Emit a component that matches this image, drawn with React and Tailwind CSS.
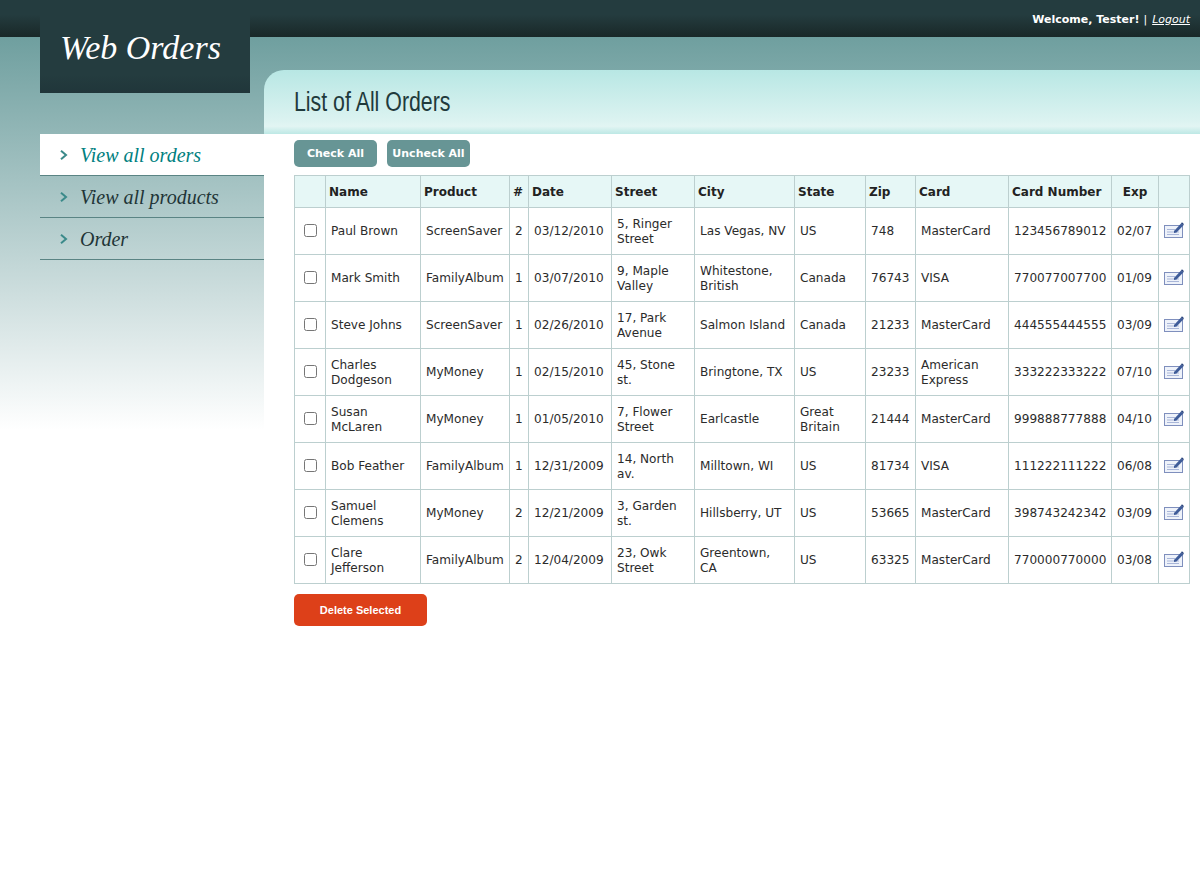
import React from 'react';

const orders = [
  ['Paul Brown', 'ScreenSaver', '2', '03/12/2010', '5, Ringer Street', 'Las Vegas, NV', 'US', '748', 'MasterCard', '123456789012', '02/07'],
  ['Mark Smith', 'FamilyAlbum', '1', '03/07/2010', '9, Maple Valley', 'Whitestone, British', 'Canada', '76743', 'VISA', '770077007700', '01/09'],
  ['Steve Johns', 'ScreenSaver', '1', '02/26/2010', '17, Park Avenue', 'Salmon Island', 'Canada', '21233', 'MasterCard', '444555444555', '03/09'],
  ['Charles Dodgeson', 'MyMoney', '1', '02/15/2010', '45, Stone st.', 'Bringtone, TX', 'US', '23233', 'American Express', '333222333222', '07/10'],
  ['Susan McLaren', 'MyMoney', '1', '01/05/2010', '7, Flower Street', 'Earlcastle', 'Great Britain', '21444', 'MasterCard', '999888777888', '04/10'],
  ['Bob Feather', 'FamilyAlbum', '1', '12/31/2009', '14, North av.', 'Milltown, WI', 'US', '81734', 'VISA', '111222111222', '06/08'],
  ['Samuel Clemens', 'MyMoney', '2', '12/21/2009', '3, Garden st.', 'Hillsberry, UT', 'US', '53665', 'MasterCard', '398743242342', '03/09'],
  ['Clare Jefferson', 'FamilyAlbum', '2', '12/04/2009', '23, Owk Street', 'Greentown, CA', 'US', '63325', 'MasterCard', '770000770000', '03/08'],
];

const columns = ['', 'Name', 'Product', '#', 'Date', 'Street', 'City', 'State', 'Zip', 'Card', 'Card Number', 'Exp', ''];
const widths = [31, 95, 89, 19, 83, 83, 100, 71, 50, 93, 103, 47, 31];

export default function App() {
  return (
    <div className="relative min-h-[888px] bg-white font-['DejaVu_Sans',sans-serif]">
      {/* Top bar */}
      <header className="flex h-[37px] items-start justify-end bg-gradient-to-b from-[#243c3f] from-40% to-[#192828] pr-[10px] pt-[13px] text-[11px] leading-[14px] text-white">
        <span className="font-bold">Welcome, Tester!</span>
        <span className="ml-[4px] mr-[5px]">|</span>
        <a className="italic underline">Logout</a>
      </header>

      {/* Logo */}
      <div className="absolute left-[40px] top-0 flex h-[93px] w-[210px] items-center bg-gradient-to-b from-[#243c3f] from-80% to-[#20363a] pl-[20px] pt-[2px] font-['Liberation_Serif',serif] text-[34px] italic text-white">
        Web Orders
      </div>

      <div className="flex bg-[linear-gradient(to_bottom,#6f9f9f,#ffffff)] bg-[size:100%_393px] bg-no-repeat">
        {/* Sidebar */}
        <aside className="w-[264px] shrink-0 pl-[40px] pt-[97px]">
          <NavItem label="View all orders" active />
          <NavItem label="View all products" />
          <NavItem label="Order" />
        </aside>

        {/* Main */}
        <main className="mt-[33px] min-w-0 flex-1">
          <div className="flex h-[64px] items-center rounded-tl-[20px] bg-[linear-gradient(to_bottom,#b8e7e4,#dcf3f1_80%,#e2f5f3_88%,#bde8e5)] pl-[30px]">
            <h1 className="origin-left scale-x-[0.79] font-['Liberation_Sans',sans-serif] text-[27px] leading-[32px] text-[#1f3a3c]">
              List of All Orders
            </h1>
          </div>

          <div className="bg-white pl-[30px] pr-[10px]">
            <div className="flex gap-[10px] pt-[6px]">
              <ToolButton label="Check All" />
              <ToolButton label="Uncheck All" />
            </div>

            <table className="mt-[8px] w-[896px] table-fixed border-collapse text-[12.1px] leading-[15px] text-[#2b2b2b]">
              <colgroup>
                {widths.map((w, i) => (
                  <col key={i} style={{ width: w }} />
                ))}
              </colgroup>
              <thead>
                <tr className="h-[32px] bg-[#e6f7f6]">
                  {columns.map((c, i) => (
                    <th
                      key={i}
                      className={'border border-[#bccfcf] px-[3px] pt-[2px] text-[12px] font-bold text-[#222222] ' + (c === 'Exp' ? 'text-center' : 'text-left')}
                    >
                      {c}
                    </th>
                  ))}
                </tr>
              </thead>
              <tbody>
                {orders.map((row) => (
                  <tr key={row[0]} className="h-[47px]">
                    <td className="border border-[#bccfcf] text-center">
                      <input type="checkbox" className="m-0 mb-[2px] inline-block h-[13px] w-[13px] align-middle" />
                    </td>
                    {row.map((v, i) => (
                      <td key={i} className="border border-[#bccfcf] px-[5px] pt-[1px]">
                        {v}
                      </td>
                    ))}
                    <td className="border border-[#bccfcf] text-center">
                      <EditIcon />
                    </td>
                  </tr>
                ))}
              </tbody>
            </table>

            <button className="mt-[10px] h-[32px] w-[133px] rounded-[5px] bg-[#dd4019] font-['Liberation_Sans',sans-serif] text-[11px] font-bold text-white">
              Delete Selected
            </button>
          </div>
        </main>
      </div>
    </div>
  );
}

function NavItem({ label, active }) {
  return (
    <div
      className={
        'flex h-[42px] items-center border-b border-[#5a8484] pl-[20px] font-[\'Liberation_Serif\',serif] text-[20px] italic ' +
        (active ? 'bg-white text-[#008080]' : 'text-[#1f3537]')
      }
    >
      <svg width="8" height="10" viewBox="0 0 8 10" fill="none" stroke="#3b8a8a" strokeWidth="2" className="mr-[12px] shrink-0">
        <path d="M1 0.8 L6 5 L1 9.2" />
      </svg>
      {label}
    </div>
  );
}

function ToolButton({ label }) {
  return (
    <button className="h-[27px] w-[83px] rounded-[5px] bg-[#679595] pt-[1px] text-[11px] font-bold text-white">
      {label}
    </button>
  );
}

function EditIcon() {
  return (
    <svg width="20" height="18" viewBox="0 0 20 18" className="mb-[2px] inline-block align-middle">
      <rect x="0.5" y="4.5" width="18" height="12" fill="#eef2fa" stroke="#7f8fbd" />
      <path d="M3 8.5 H11 M3 11 H15 M3 13.5 H15" stroke="#a9b6d8" strokeWidth="1" />
      <path d="M10 10 L17 2.5 L19.3 4.5 L12.5 11.5 L10 12 Z" fill="#3f5c99" />
      <path d="M17 2.5 L18 1.2 L19.8 3 L19.3 4.5 Z" fill="#25407a" />
    </svg>
  );
}
